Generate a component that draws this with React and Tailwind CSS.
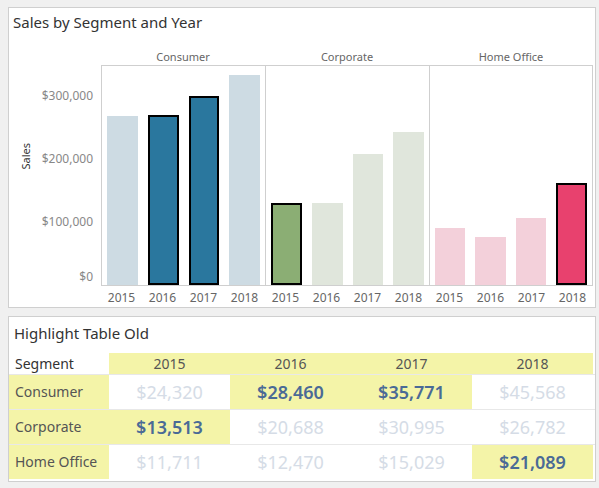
const panes = [
  { name: "Consumer", bars: [[169, "#cddbe3", false], [170, "#2a779e", true], [189, "#2a779e", true], [210, "#cddbe3", false]] },
  { name: "Corporate", bars: [[82, "#8bae74", true], [82, "#e0e6dc", false], [131, "#e0e6dc", false], [153, "#e0e6dc", false]] },
  { name: "Home Office", bars: [[57, "#f3d0da", false], [48, "#f3d0da", false], [67, "#f3d0da", false], [102, "#e8416e", true]] },
];
const years = ["2015", "2016", "2017", "2018"];
const rows = [
  ["Consumer", [["$24,320", 0], ["$28,460", 1], ["$35,771", 1], ["$45,568", 0]]],
  ["Corporate", [["$13,513", 1], ["$20,688", 0], ["$30,995", 0], ["$26,782", 0]]],
  ["Home Office", [["$11,711", 0], ["$12,470", 0], ["$15,029", 0], ["$21,089", 1]]],
];
const font = { fontFamily: '"Noto Sans", "Open Sans", sans-serif' };

export default function App() {
  return (
    <div className="w-[599px] h-[488px] bg-[#f0f0f0] pt-[7px] pl-[8px]" style={font}>
      <div className="w-[588px] h-[301px] bg-white border border-[#cfcfcf] relative">
        <div className="absolute left-[4px] top-[3px] text-[15px] text-[#333]">Sales by Segment and Year</div>
        <div className="absolute left-[0px] top-[140px] w-[34px] flex justify-center">
          <span className="-rotate-90 text-[11px] text-[#333]">Sales</span>
        </div>
        {[["$300,000", 82], ["$200,000", 145], ["$100,000", 208], ["$0", 263]].map(([t, y]) => (
          <div key={t} className="absolute right-[502px] text-[12px] text-[#888] leading-none" style={{ top: y }}>{t}</div>
        ))}
        <div className="absolute left-[92px] top-[41px] flex">
          {panes.map((p, pi) => (
            <div key={p.name} className="w-[164px] flex flex-col">
              <div className="h-[16px] text-center text-[11px] text-[#666] leading-[16px]">{p.name}</div>
              <div className={`h-[221px] border-t border-b border-l border-[#cfcfcf] flex items-end gap-[10px] px-[5px] ${pi === 2 ? "border-r" : ""}`}>
                {p.bars.map(([h, c, sel], i) => (
                  <div key={i} className={`w-[31px] ${sel ? "border-2 border-black" : ""}`} style={{ height: h, background: c }} />
                ))}
              </div>
              <div className="flex px-[1px] gap-[2px] mt-[3px]">
                {years.map(y => <div key={y} className="w-[39px] text-center text-[12px] text-[#666]">{y}</div>)}
              </div>
            </div>
          ))}
        </div>
      </div>
      <div className="w-[588px] h-[166px] mt-[8px] bg-white border border-[#cfcfcf] flex flex-col">
        <div className="h-[36px] pl-[5px] pt-[5px] text-[15px] text-[#333]">Highlight Table Old</div>
        <div className="flex h-[21px] items-stretch">
          <div className="w-[100px] pl-[6px] text-[14px] text-[#333] leading-[21px]">Segment</div>
          <div className="flex bg-[#f4f4a8] flex-1 mr-[2px]">
            {years.map(y => <div key={y} className="flex-1 text-center text-[14px] text-[#555] leading-[21px]">{y}</div>)}
          </div>
        </div>
        {rows.map(([name, vals]) => (
          <div key={name} className="flex h-[35px] border-t border-[#e8e8e8]">
            <div className="w-[100px] bg-[#f4f4a8] pl-[6px] text-[14px] text-[#555] leading-[34px]">{name}</div>
            <div className="flex flex-1 mr-[2px]">
              {vals.map(([v, hi], i) => (
                <div key={i} className={`flex-1 text-center text-[18px] leading-[34px] ${hi ? "bg-[#f4f4a8] text-[#4a6a96] font-semibold" : "text-[#d5dce6]"}`}>{v}</div>
              ))}
            </div>
          </div>
        ))}
      </div>
    </div>
  );
}
